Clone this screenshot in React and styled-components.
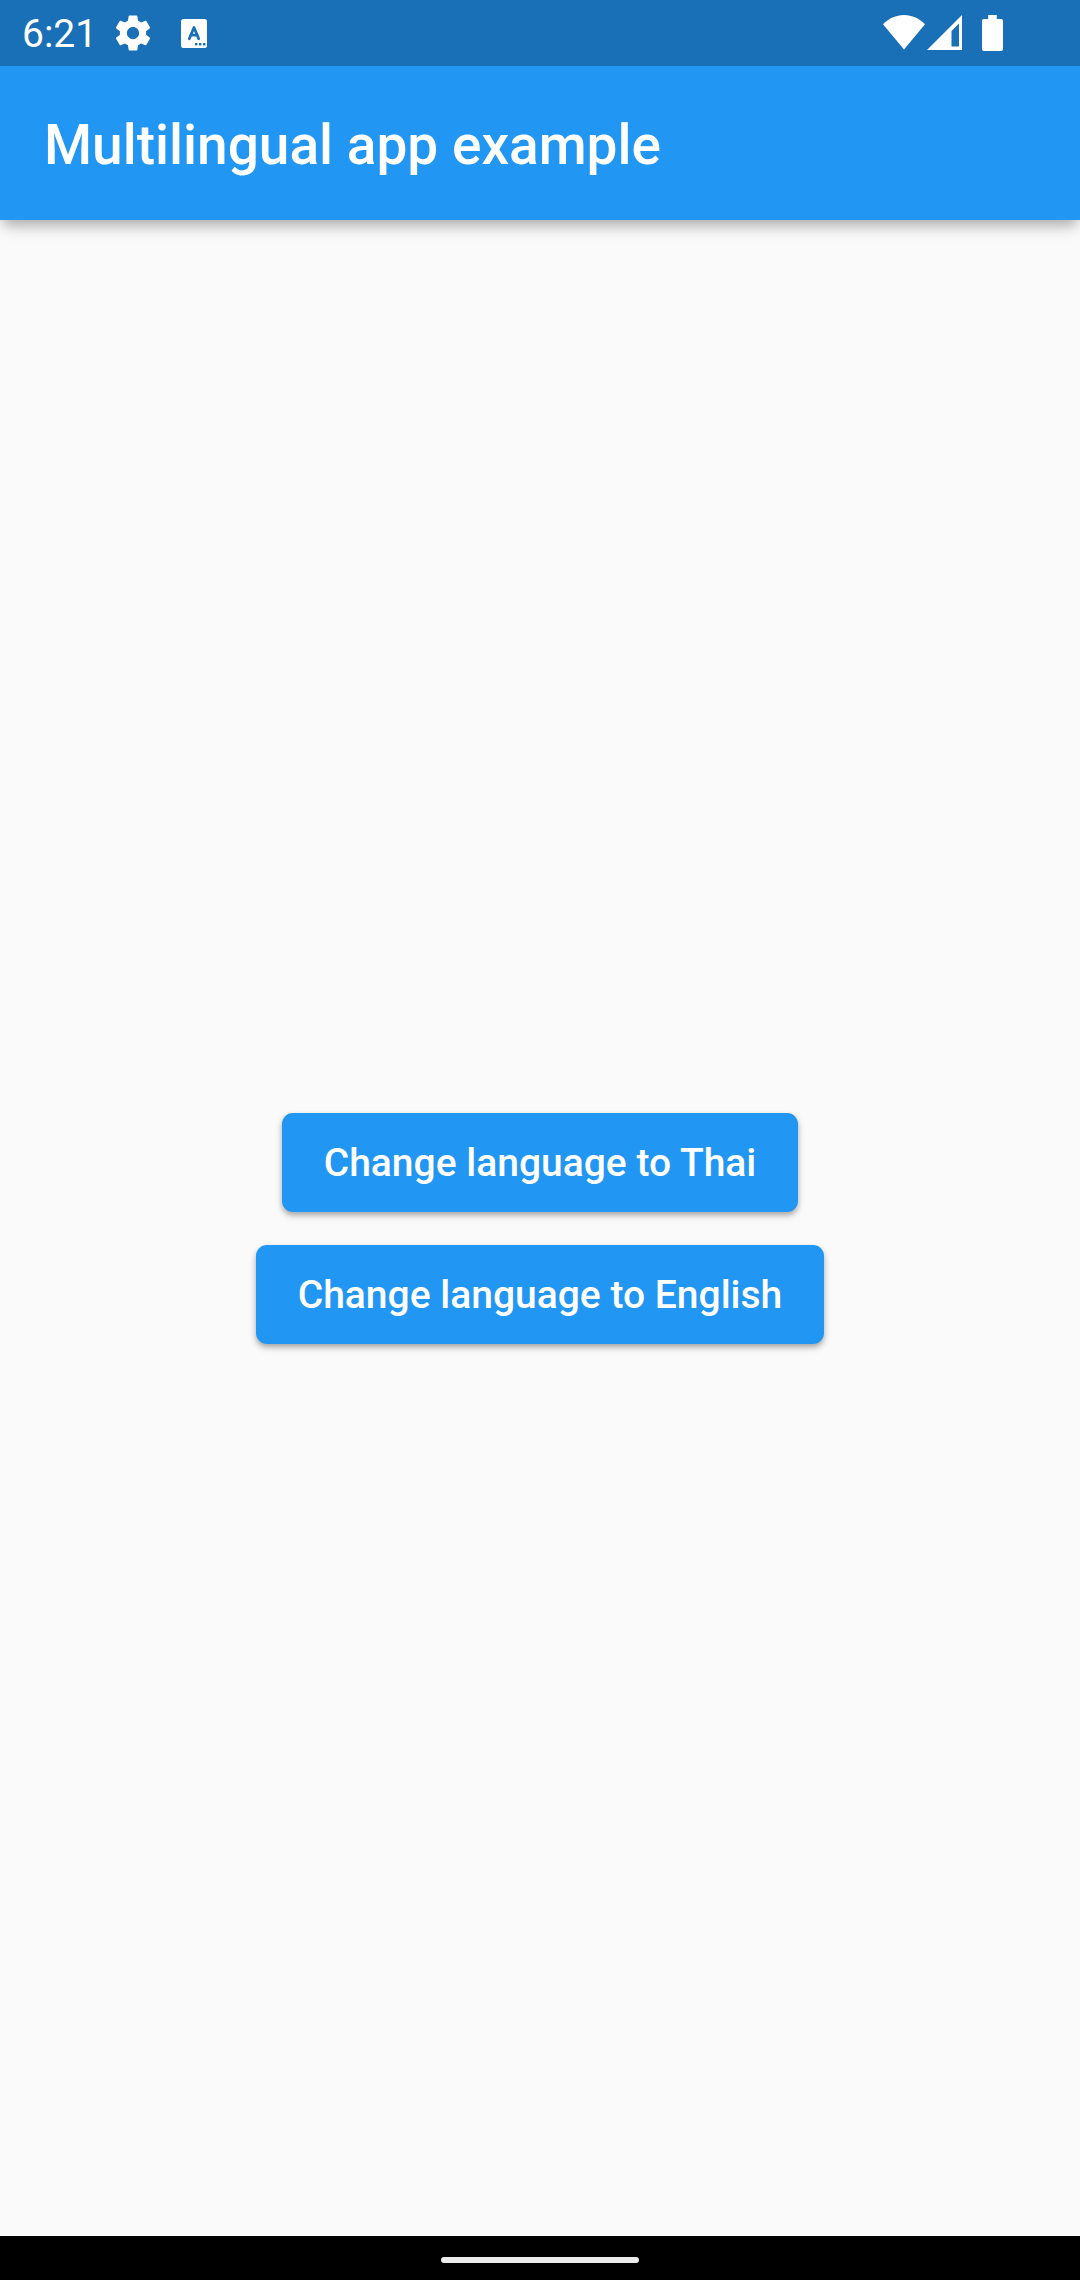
import React, { useState } from "react";
import styled, { createGlobalStyle } from "styled-components";

const GlobalStyle = createGlobalStyle`
  * {
    box-sizing: border-box;
  }

  body {
    margin: 0;
    background: #fafafa;
    font-family: Roboto, "Noto Sans", sans-serif;
  }
`;

const Screen = styled.div`
  display: flex;
  flex-direction: column;
  min-height: 100vh;
`;

const StatusBar = styled.div`
  position: relative;
  z-index: 1;
  display: flex;
  align-items: center;
  justify-content: space-between;
  height: 66px;
  padding: 0 77px 0 22px;
  background: #1a70b6;
  color: #fff;
`;

const StatusGroup = styled.div`
  display: flex;
  align-items: center;
`;

const Clock = styled.time`
  font-size: 39px;
  line-height: 46px;
  padding-top: 2px;
  margin-right: 15px;
`;

const Icon = styled.svg`
  display: block;
  flex: none;
  fill: currentColor;
  margin-left: ${({ $gap = 0 }) => $gap}px;
`;

const AppBar = styled.header`
  display: flex;
  align-items: center;
  height: 154px;
  padding: 4px 44px 0;
  background: #2196f3;
  color: #fff;
  box-shadow: 0 8px 14px -3px rgba(0, 0, 0, 0.34);
`;

const Title = styled.h1`
  margin: 0;
  font-size: 55px;
  line-height: 64px;
  font-weight: 500;
`;

const Content = styled.main`
  flex: 1;
  display: flex;
  flex-direction: column;
  align-items: center;
  justify-content: center;
  gap: 33px;
`;

const LanguageButton = styled.button`
  height: 99px;
  padding: 2px 42px 0;
  border: 0;
  border-radius: 11px;
  background: #2196f3;
  color: #fff;
  font-family: inherit;
  font-size: 39px;
  line-height: 46px;
  font-weight: 500;
  cursor: pointer;
  box-shadow: 0 3px 5px rgba(0, 0, 0, 0.24), 0 4px 8px rgba(0, 0, 0, 0.12);
`;

const NavigationBar = styled.footer`
  display: flex;
  align-items: center;
  justify-content: center;
  height: 44px;
  padding-top: 4px;
  background: #000;
`;

const HomeHandle = styled.div`
  width: 198px;
  height: 6px;
  border-radius: 3px;
  background: #ebebeb;
`;

function GearIcon() {
  return (
    <Icon width="42" height="42" viewBox="0 0 24 24" aria-hidden="true">
      <path d="M19.43 12.98c.04-.32.07-.64.07-.98s-.03-.66-.07-.98l2.11-1.65c.19-.15.24-.42.12-.64l-2-3.46c-.12-.22-.39-.3-.61-.22l-2.49 1c-.52-.4-1.08-.73-1.69-.98l-.38-2.65C14.46 2.18 14.25 2 14 2h-4c-.25 0-.46.18-.49.42l-.38 2.65c-.61.25-1.17.59-1.69.98l-2.49-1c-.23-.09-.49 0-.61.22l-2 3.46c-.13.22-.07.49.12.64l2.11 1.65c-.04.32-.07.65-.07.98s.03.66.07.98l-2.11 1.65c-.19.15-.24.42-.12.64l2 3.46c.12.22.39.3.61.22l2.49-1c.52.4 1.08.73 1.69.98l.38 2.65c.03.24.24.42.49.42h4c.25 0 .46-.18.49-.42l.38-2.65c.61-.25 1.17-.59 1.69-.98l2.49 1c.23.09.49 0 .61-.22l2-3.46c.12-.22.07-.49-.12-.64l-2.11-1.65zM12 15.5c-1.93 0-3.5-1.57-3.5-3.5s1.57-3.5 3.5-3.5 3.5 1.57 3.5 3.5-1.57 3.5-3.5 3.5z" />
    </Icon>
  );
}

function KeyboardIcon() {
  return (
    <Icon $gap={27} width="26" height="29" viewBox="0 0 26 29" aria-hidden="true">
      <rect width="26" height="29" rx="2.5" />
      <g fill="none" stroke="#1a70b6" strokeWidth="2.8" strokeLinecap="round" strokeLinejoin="round">
        <path d="M8.3 19.7 13 8.500l4.7 11.2" />
        <path d="M10 16.2h6" />
      </g>
      <g fill="#1a70b6">
        <rect x="14" y="24" width="2.4" height="2.4" />
        <rect x="18" y="24" width="2.4" height="2.4" />
        <rect x="22" y="24" width="2.4" height="2.4" />
      </g>
    </Icon>
  );
}

function WifiIcon() {
  return (
    <Icon width="42" height="36" viewBox="0 0 42 36" aria-hidden="true">
      <path d="M0 9.3C5.5 3.5 13 0 21 0s15.5 3.5 21 9.3L21 34.5z" />
    </Icon>
  );
}

function SignalIcon() {
  return (
    <Icon $gap={2} width="35" height="36" viewBox="0 0 35 36" aria-hidden="true">
      <path fillRule="evenodd" d="M35 0v35H0zM32 8.5 24.5 16v15.5H32z" />
    </Icon>
  );
}

function BatteryIcon() {
  return (
    <Icon $gap={20} width="21" height="36" viewBox="0 0 21 36" aria-hidden="true">
      <path d="M6.2 0h8.6v4h4.4q1.8 0 1.8 1.8v28.4q0 1.8-1.8 1.8H1.8Q0 36 0 34.2V5.8Q0 4 1.8 4h4.4z" />
    </Icon>
  );
}

const languages = [
  { code: "th", name: "Thai" },
  { code: "en", name: "English" },
];

export default function App() {
  const [, setLanguage] = useState("en");

  return (
    <>
      <GlobalStyle />
      <Screen>
        <StatusBar>
          <StatusGroup>
            <Clock>6:21</Clock>
            <GearIcon />
            <KeyboardIcon />
          </StatusGroup>
          <StatusGroup>
            <WifiIcon />
            <SignalIcon />
            <BatteryIcon />
          </StatusGroup>
        </StatusBar>
        <AppBar>
          <Title>Multilingual app example</Title>
        </AppBar>
        <Content>
          {languages.map(({ code, name }) => (
            <LanguageButton key={code} type="button" onClick={() => setLanguage(code)}>
              Change language to {name}
            </LanguageButton>
          ))}
        </Content>
        <NavigationBar>
          <HomeHandle />
        </NavigationBar>
      </Screen>
    </>
  );
}
